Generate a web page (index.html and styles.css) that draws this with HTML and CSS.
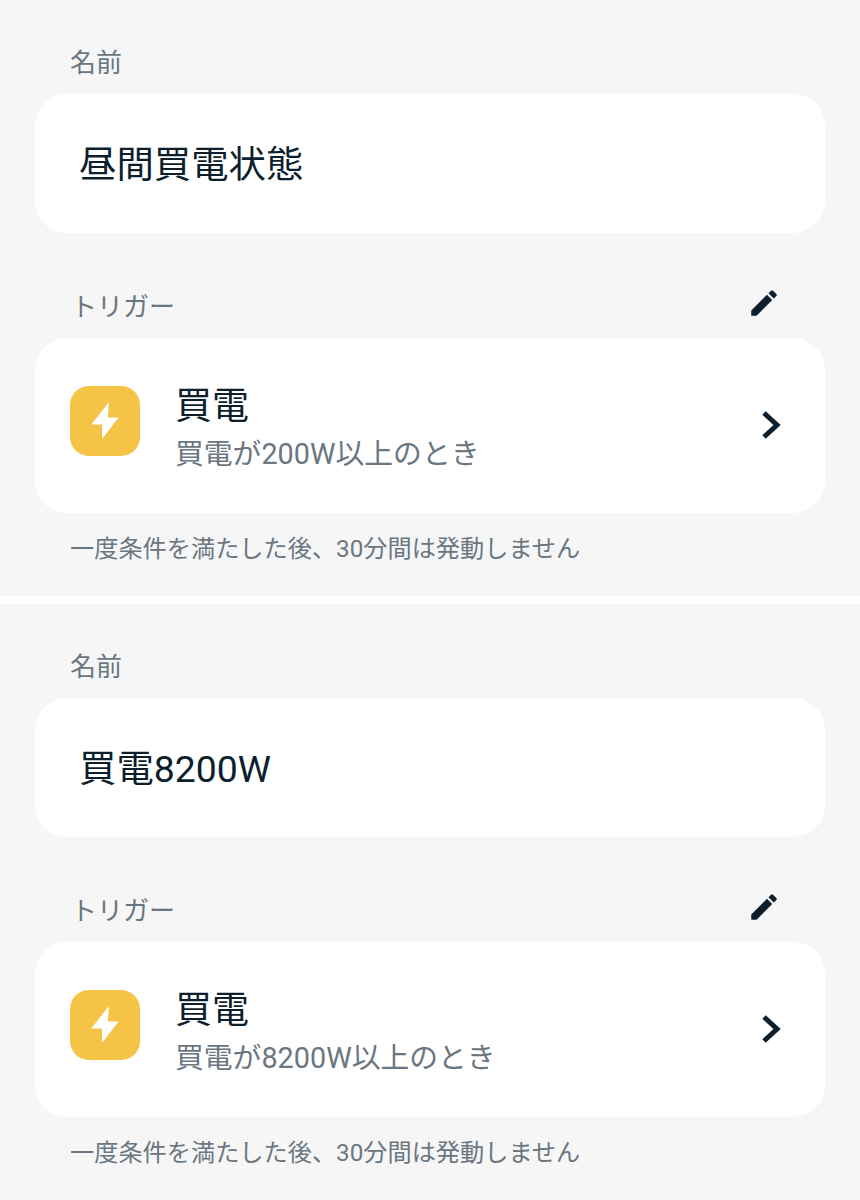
FILE: index.html
```html
<!DOCTYPE html>
<html lang="ja">
<head>
<meta charset="utf-8">
<title>トリガー</title>
<link rel="stylesheet" href="styles.css">
</head>
<body>
<section class="panel">
  <div class="label name-label">名前</div>
  <div class="card name-card">昼間買電状態</div>
  <div class="trigger-head">
    <span class="label">トリガー</span>
    <svg class="pencil" viewBox="0 0 24 24"><path d="M3 17.25V21h3.75L17.81 9.94l-3.75-3.75L3 17.25zM20.71 7.04a1 1 0 0 0 0-1.41l-2.34-2.34a1 1 0 0 0-1.41 0l-1.83 1.83 3.75 3.75 1.83-1.83z"/></svg>
  </div>
  <div class="card trigger-card">
    <div class="bolt-box">
      <svg class="bolt" viewBox="0 0 28 38"><path d="M18 0 0 23h11v15l17-22H17z"/></svg>
    </div>
    <div class="trigger-text">
      <div class="trigger-title">買電</div>
      <div class="trigger-sub">買電が200W以上のとき</div>
    </div>
    <svg class="chevron" viewBox="0 0 20 30"><path d="M3 3l13 12L3 27"/></svg>
  </div>
  <div class="note">一度条件を満たした後、30分間は発動しません</div>
</section>
<section class="panel second">
  <div class="label name-label">名前</div>
  <div class="card name-card">買電8200W</div>
  <div class="trigger-head">
    <span class="label">トリガー</span>
    <svg class="pencil" viewBox="0 0 24 24"><path d="M3 17.25V21h3.75L17.81 9.94l-3.75-3.75L3 17.25zM20.71 7.04a1 1 0 0 0 0-1.41l-2.34-2.34a1 1 0 0 0-1.41 0l-1.83 1.83 3.75 3.75 1.83-1.83z"/></svg>
  </div>
  <div class="card trigger-card">
    <div class="bolt-box">
      <svg class="bolt" viewBox="0 0 28 38"><path d="M18 0 0 23h11v15l17-22H17z"/></svg>
    </div>
    <div class="trigger-text">
      <div class="trigger-title">買電</div>
      <div class="trigger-sub">買電が8200W以上のとき</div>
    </div>
    <svg class="chevron" viewBox="0 0 20 30"><path d="M3 3l13 12L3 27"/></svg>
  </div>
  <div class="note">一度条件を満たした後、30分間は発動しません</div>
</section>
</body>
</html>
```
FILE: styles.css
```css
* { box-sizing: border-box; }
html, body { margin: 0; padding: 0; }
body {
  width: 860px;
  height: 1200px;
  overflow: hidden;
  background: #fff;
  font-family: Roboto, "Noto Sans CJK JP", sans-serif;
}
.panel {
  height: 596px;
  background: #f6f6f7;
  padding: 46px 35px 0;
}
.panel.second { margin-top: 8px; }
.label {
  font-size: 26px;
  line-height: 34px;
  color: #6b7680;
}
.name-label { padding-left: 35px; height: 48px; }
.card { background: #fff; border-radius: 32px; }
.name-card {
  height: 139px;
  padding: 0 0 4px 44px;
  display: flex;
  align-items: center;
  font-size: 37.4px;
  color: #0d1f2d;
}
.trigger-head {
  height: 105px;
  padding: 0 44px 0 36px;
  display: flex;
  justify-content: space-between;
  align-items: flex-end;
}
.trigger-head .label { padding-bottom: 14px; }
.pencil { width: 34px; height: 34px; fill: #0d1f2d; margin-bottom: 18px; }
.trigger-card {
  height: 175px;
  padding: 0 44px 0 35px;
  display: flex;
  align-items: center;
}
.bolt-box {
  width: 70px;
  height: 70px;
  margin-top: -10px;
  border-radius: 19px;
  background: #f5c345;
  display: flex;
  align-items: center;
  justify-content: center;
}
.bolt { width: 28px; height: 37px; fill: #fff; }
.trigger-text { flex: 1; margin-left: 35px; padding-top: 6px; }
.trigger-title { font-size: 37px; line-height: 50px; color: #0d1f2d; }
.trigger-sub { font-size: 28.8px; line-height: 44px; color: #6b7680; }
.chevron { width: 20px; height: 30px; margin-top: -2px; fill: none; stroke: #0d1f2d; stroke-width: 5; }
.note {
  margin-top: 19px;
  padding-left: 35px;
  font-size: 24.2px;
  line-height: 34px;
  color: #6b7680;
}
```
